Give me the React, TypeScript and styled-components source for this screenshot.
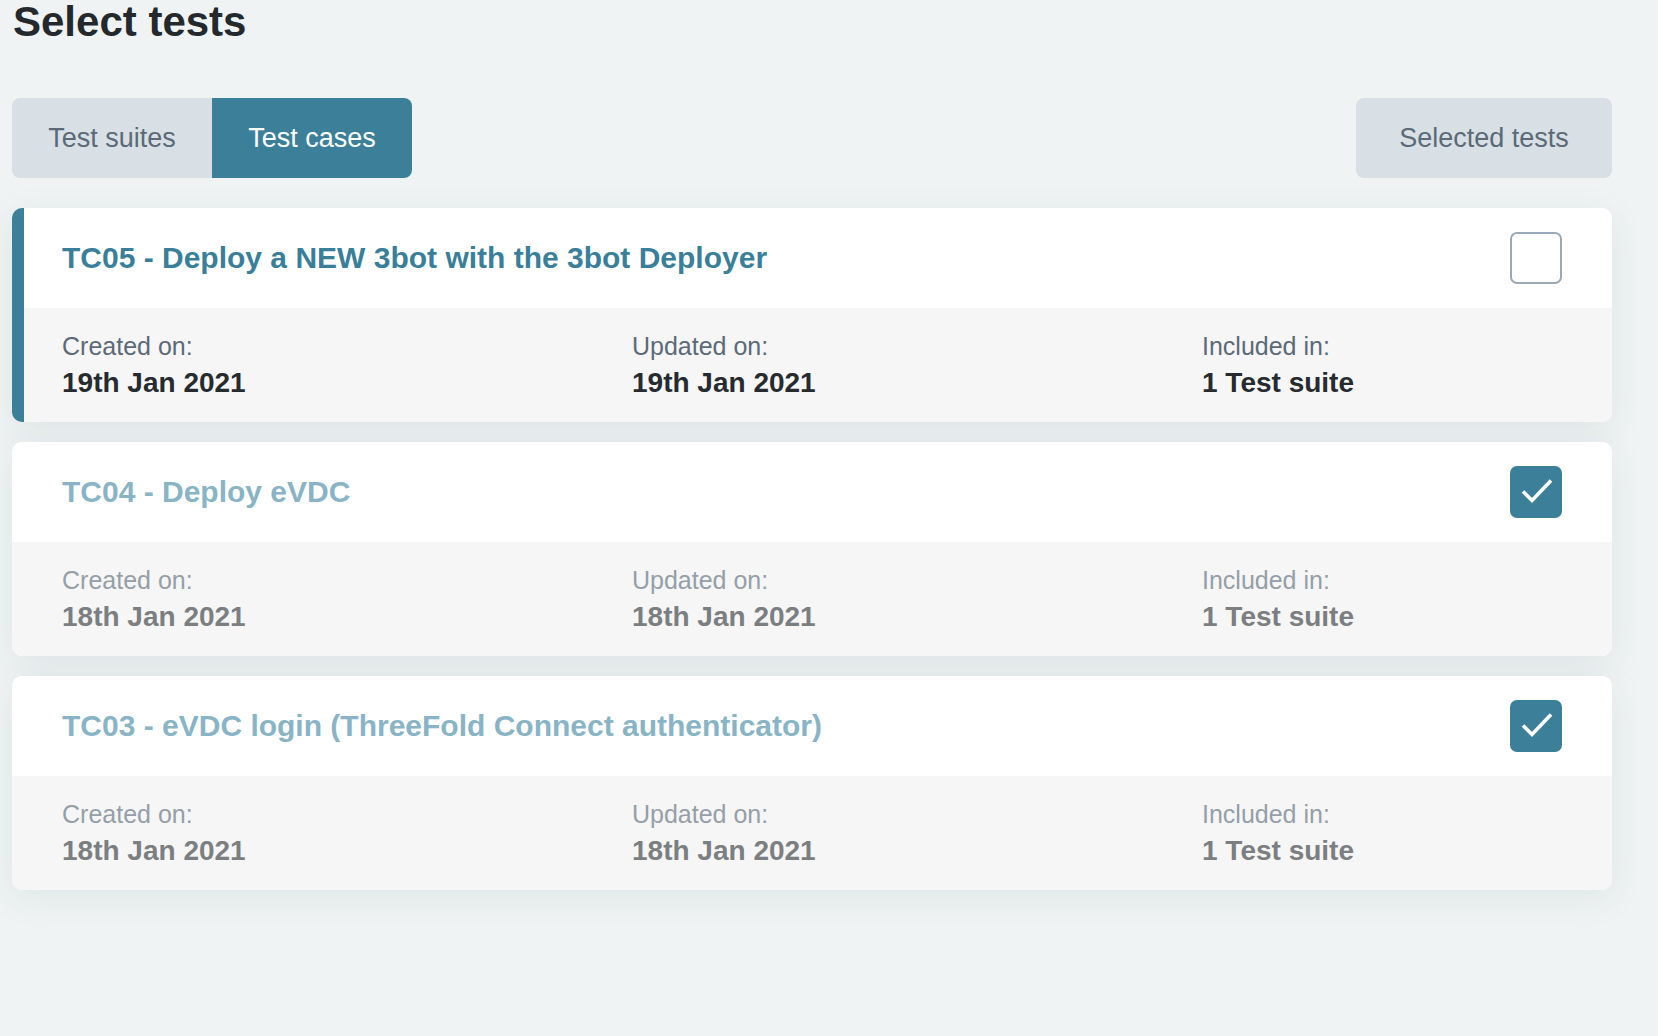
import styled, { createGlobalStyle } from 'styled-components';

const GlobalStyle = createGlobalStyle`
  body {
    margin: 0;
    background: #eff3f4;
    font-family: "Liberation Sans", Arial, sans-serif;
  }
`;

const Page = styled.div`
  width: 1600px;
  margin-left: 12px;
  padding-top: 2px;
  padding-bottom: 120px;
`;

const Heading = styled.h1`
  margin: 0 0 0 1px;
  font-size: 42px;
  line-height: 40px;
  font-weight: 700;
  color: #23292d;
`;

const Toolbar = styled.div`
  display: flex;
  justify-content: space-between;
  margin-top: 56px;
`;

const Tabs = styled.div`
  display: flex;
  border-radius: 8px;
  overflow: hidden;
`;

const Tab = styled.button<{ $active?: boolean }>`
  width: 200px;
  height: 80px;
  border: none;
  padding: 0;
  font-family: inherit;
  font-size: 27px;
  background: ${(p) => (p.$active ? '#3b7f99' : '#d8e0e5')};
  color: ${(p) => (p.$active ? '#ffffff' : '#5b6a78')};
  cursor: pointer;
`;

const SelectedButton = styled.button`
  width: 256px;
  height: 80px;
  border: none;
  border-radius: 8px;
  background: #d8e0e5;
  color: #5b6a78;
  font-family: inherit;
  font-size: 27px;
  cursor: pointer;
`;

const List = styled.div`
  display: flex;
  flex-direction: column;
  gap: 20px;
  margin-top: 30px;
`;

const Card = styled.div<{ $active?: boolean }>`
  border-radius: 10px;
  overflow: hidden;
  background: #fff;
  border-left: ${(p) => (p.$active ? '12px solid #3b7f99' : 'none')};
  box-shadow: 0 8px 36px rgba(40, 60, 70, 0.08);
`;

const Header = styled.div<{ $active?: boolean }>`
  height: 100px;
  display: flex;
  align-items: center;
  justify-content: space-between;
  padding: 0 50px 0 ${(p) => (p.$active ? 38 : 50)}px;
  background: #fff;
`;

const Title = styled.div<{ $faded?: boolean }>`
  font-size: 30px;
  font-weight: 700;
  color: ${(p) => (p.$faded ? '#88b4c5' : '#3a7f99')};
`;

const Box = styled.div<{ $checked?: boolean }>`
  width: 52px;
  height: 52px;
  box-sizing: border-box;
  border-radius: 7px;
  border: ${(p) => (p.$checked ? 'none' : '2px solid #9aa9b7')};
  background: ${(p) => (p.$checked ? '#3b7f99' : '#fff')};
  display: flex;
  align-items: center;
  justify-content: center;
`;

const Footer = styled.div<{ $active?: boolean }>`
  display: grid;
  grid-template-columns: 570px 570px 1fr;
  padding: 24px 50px 23px ${(p) => (p.$active ? 38 : 50)}px;
  background: #f6f6f6;
`;

const Label = styled.div<{ $faded?: boolean }>`
  font-size: 25px;
  line-height: 29px;
  color: ${(p) => (p.$faded ? '#949fa9' : '#5b6a78')};
`;

const Value = styled.div<{ $faded?: boolean }>`
  margin-top: 6px;
  font-size: 28px;
  line-height: 32px;
  font-weight: 700;
  color: ${(p) => (p.$faded ? '#7b7f81' : '#262b2f')};
`;

const tests = [
  {
    id: 'TC05',
    title: 'TC05 - Deploy a NEW 3bot with the 3bot Deployer',
    created: '19th Jan 2021',
    updated: '19th Jan 2021',
    included: '1 Test suite',
    checked: false,
    active: true,
  },
  {
    id: 'TC04',
    title: 'TC04 - Deploy eVDC',
    created: '18th Jan 2021',
    updated: '18th Jan 2021',
    included: '1 Test suite',
    checked: true,
    active: false,
  },
  {
    id: 'TC03',
    title: 'TC03 - eVDC login (ThreeFold Connect authenticator)',
    created: '18th Jan 2021',
    updated: '18th Jan 2021',
    included: '1 Test suite',
    checked: true,
    active: false,
  },
];

function Check() {
  return (
    <svg width="52" height="52" viewBox="0 0 52 52">
      <polyline
        points="13,25.5 22,34.5 41,14.5"
        fill="none"
        stroke="#fff"
        strokeWidth="3.6"
      />
    </svg>
  );
}

export default function App() {
  return (
    <>
      <GlobalStyle />
      <Page>
        <Heading>Select tests</Heading>
        <Toolbar>
          <Tabs>
            <Tab>Test suites</Tab>
            <Tab $active>Test cases</Tab>
          </Tabs>
          <SelectedButton>Selected tests</SelectedButton>
        </Toolbar>
        <List>
          {tests.map((t) => (
            <Card key={t.id} $active={t.active}>
              <Header $active={t.active}>
                <Title $faded={t.checked}>{t.title}</Title>
                <Box $checked={t.checked}>{t.checked && <Check />}</Box>
              </Header>
              <Footer $active={t.active}>
                <div>
                  <Label $faded={t.checked}>Created on:</Label>
                  <Value $faded={t.checked}>{t.created}</Value>
                </div>
                <div>
                  <Label $faded={t.checked}>Updated on:</Label>
                  <Value $faded={t.checked}>{t.updated}</Value>
                </div>
                <div>
                  <Label $faded={t.checked}>Included in:</Label>
                  <Value $faded={t.checked}>{t.included}</Value>
                </div>
              </Footer>
            </Card>
          ))}
        </List>
      </Page>
    </>
  );
}
